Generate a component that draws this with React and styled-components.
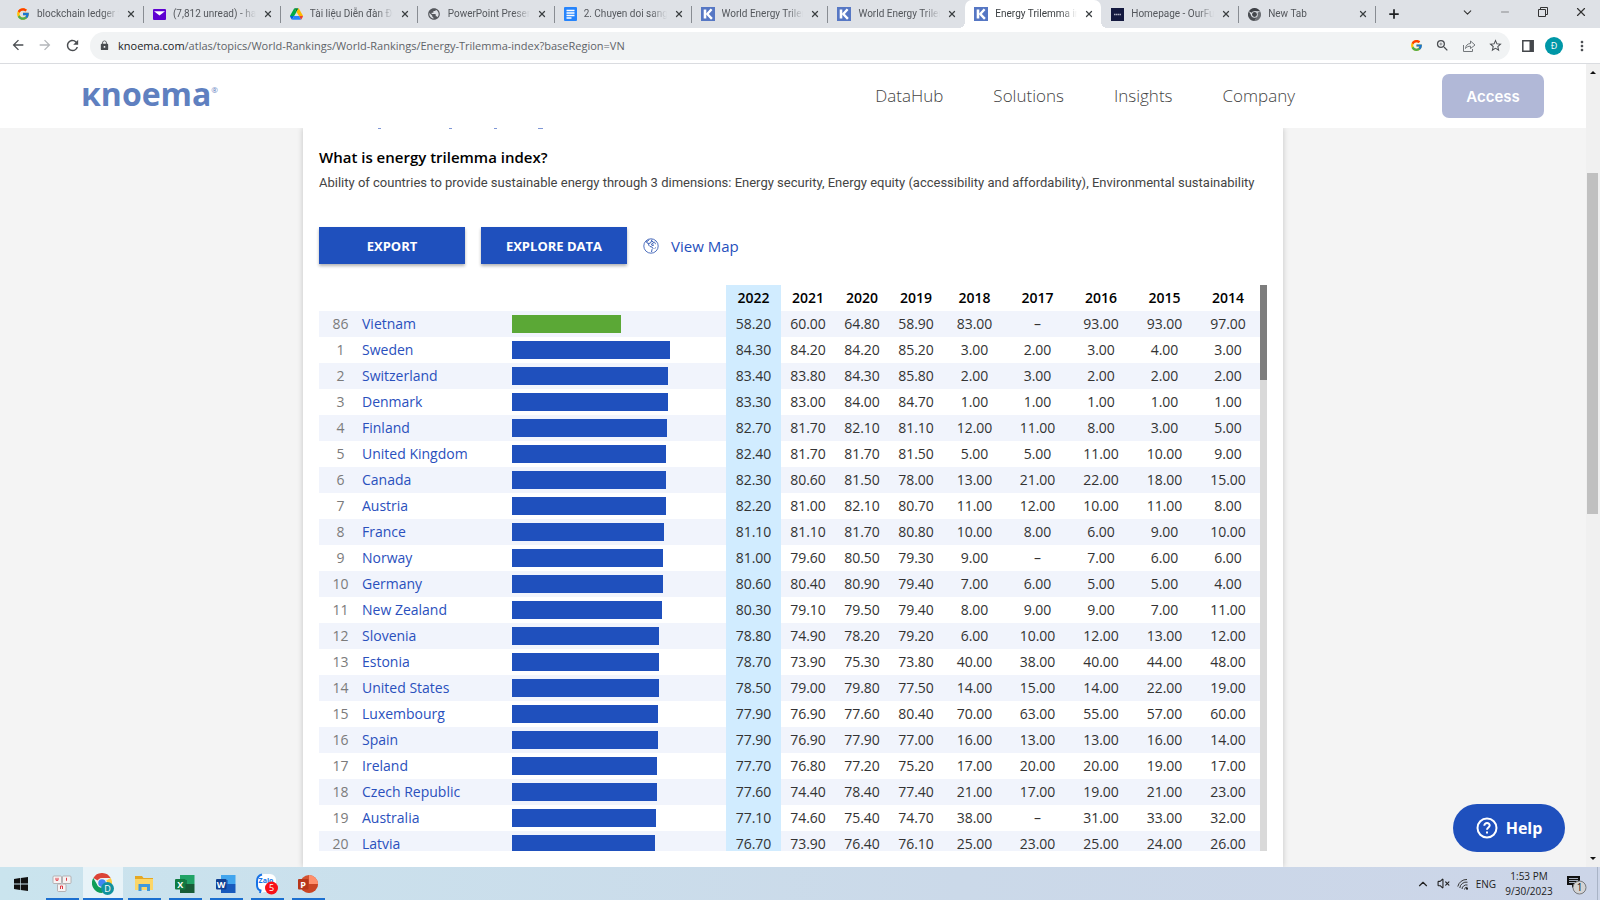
import React from "react";
import styled, { createGlobalStyle, css } from "styled-components";
import { X, Plus, ChevronDown, ChevronUp, Minus, VolumeX } from "lucide-react";
import { FcGoogle } from "react-icons/fc";
import {
  MdArrowBack,
  MdArrowForward,
  MdRefresh,
  MdLock,
  MdZoomIn,
  MdStarBorder,
  MdMoreVert,
  MdPublic,
} from "react-icons/md";

const GlobalStyle = createGlobalStyle`
  * {
    box-sizing: border-box;
  }
  body {
    margin: 0;
    font-family: "Open Sans", "Noto Sans", sans-serif;
    color: #333;
  }
  button {
    font-family: inherit;
    border: none;
    background: none;
    padding: 0;
    cursor: pointer;
  }
  a {
    text-decoration: none;
  }
  svg {
    display: block;
    flex-shrink: 0;
  }
`;

const Window = styled.div`
  display: flex;
  flex-direction: column;
  height: 100vh;
  overflow: hidden;
  background: #fff;
`;

/* ---------- browser tabs ---------- */

const TabStrip = styled.div`
  display: flex;
  height: 28px;
  padding-left: 7px;
  background: #dee1e6;
`;

const TabList = styled.div`
  display: flex;
  flex: 0 1 1369px;
  min-width: 0;
`;

const Tab = styled.div`
  position: relative;
  display: flex;
  flex: 1 1 0;
  align-items: center;
  gap: 7px;
  min-width: 0;
  padding: 0 7px 0 9px;
  ${(props) =>
    props.$active &&
    css`
      background: #fff;
      border-radius: 7px 7px 0 0;
      &::before,
      &::after {
        content: "";
        position: absolute;
        bottom: 0;
        width: 6px;
        height: 6px;
      }
      &::before {
        right: 100%;
        background: radial-gradient(circle at 0 0, #dee1e6 6px, #fff 6px);
      }
      &::after {
        left: 100%;
        background: radial-gradient(circle at 100% 0, #dee1e6 6px, #fff 6px);
      }
    `}
`;

const TabTitle = styled.span`
  flex: 1;
  overflow: hidden;
  font-family: Roboto, "Noto Sans", sans-serif;
  font-size: 10px;
  line-height: 16px;
  white-space: nowrap;
  color: ${(props) => (props.$active ? "#3c4043" : "#54575c")};
  mask-image: linear-gradient(to right, #000 80%, transparent);
`;

const TabClose = styled.button`
  display: flex;
  color: #3c4043;
`;

const TabDivider = styled.span`
  width: 1px;
  height: 17px;
  margin: 6px 0 0;
  background: ${(props) => (props.$hidden ? "transparent" : "#888c92")};
`;

const NewTab = styled.button`
  display: flex;
  align-items: center;
  padding-left: 11px;
  color: #1f2124;
`;

const WindowControls = styled.div`
  display: flex;
  align-items: center;
  gap: 24px;
  height: 24px;
  margin-left: auto;
  padding-right: 12px;
  color: #333;
`;

const ControlButton = styled.button`
  display: flex;
  align-items: center;
  justify-content: center;
  width: 14px;
  height: 14px;
  color: inherit;
`;

/* ---------- address bar ---------- */

const Toolbar = styled.div`
  display: flex;
  align-items: center;
  height: 36px;
  padding: 0 10px;
  border-bottom: 1px solid #dadce0;
  color: #4a4d51;
`;

const NavButtons = styled.div`
  display: flex;
  gap: 11px;
  width: 80px;
`;

const IconButton = styled.button`
  display: flex;
  color: ${(props) => (props.$faded ? "#b4b7ba" : "#4a4d51")};
`;

const AddressBar = styled.div`
  display: flex;
  flex: 1;
  align-items: center;
  gap: 12px;
  height: 28px;
  padding: 0 7px 0 9px;
  border-radius: 14px;
  background: #f1f3f4;
`;

const Site = styled.div`
  display: flex;
  flex: 1;
  align-items: center;
  gap: 8px;
  min-width: 0;
`;

const Url = styled.div`
  overflow: hidden;
  font-size: 11px;
  white-space: nowrap;
  color: #5f6368;
  span {
    color: #202124;
  }
`;

const ToolbarEnd = styled.div`
  display: flex;
  align-items: center;
  gap: 11px;
  padding-left: 12px;
`;

const Avatar = styled.span`
  width: 18px;
  height: 18px;
  border-radius: 50%;
  background: #0097a7;
  color: #fff;
  font-size: 9px;
  line-height: 18px;
  text-align: center;
`;

/* ---------- page ---------- */

const Viewport = styled.div`
  display: flex;
  flex: 1;
  min-height: 0;
  background: #f4f4f4;
`;

const Page = styled.div`
  position: relative;
  display: flex;
  flex: 1;
  flex-direction: column;
  min-width: 0;
`;

const SiteHeader = styled.header`
  display: flex;
  align-items: center;
  height: 64px;
  padding: 0 42px 0 81px;
  background: #fff;
`;

const Logo = styled.a`
  display: flex;
  align-items: flex-start;
  margin-right: auto;
  padding-bottom: 4px;
  font-size: 32px;
  font-weight: 700;
  line-height: 40px;
  color: #5f80c0;
  sup {
    font-size: 8px;
    font-weight: 400;
    line-height: 32px;
  }
`;

const SiteNav = styled.nav`
  display: flex;
  gap: 50px;
  margin-right: 147px;
`;

const NavLink = styled.a`
  font-size: 17px;
  font-weight: 300;
  line-height: 24px;
  color: #444;
`;

const AccessButton = styled.button`
  width: 102px;
  height: 44px;
  border-radius: 7px;
  background: #b1b8d7;
  color: #fff;
  font-family: Inter, sans-serif;
  font-size: 15px;
  font-weight: 600;
`;

const Card = styled.main`
  display: flex;
  flex: 1;
  flex-direction: column;
  width: 100%;
  max-width: 980px;
  min-height: 0;
  margin: 0 auto;
  padding: 0 16px 16px;
  background: #fff;
  box-shadow: 0 0 6px rgba(0, 0, 0, 0.2);
`;

const CardClip = styled.div`
  display: flex;
  flex: 1;
  min-height: 0;
  overflow: hidden;
`;

const Question = styled.h1`
  margin: 16px 0 0;
  font-size: 15px;
  font-weight: 600;
  line-height: 22px;
  color: #000;
`;

const Description = styled.p`
  margin: 5px 0 0;
  font-family: Roboto, "Noto Sans", sans-serif;
  font-size: 13px;
  line-height: 20px;
  color: #444;
`;

const Actions = styled.div`
  display: flex;
  align-items: center;
  gap: 16px;
  margin: 34px 0 21px;
`;

const ActionButton = styled.button`
  width: 146px;
  height: 37px;
  background: #1f50bd;
  box-shadow: 0 2px 3px rgba(0, 0, 0, 0.3);
  color: #fff;
  font-size: 13px;
  font-weight: 700;
`;

const MapLink = styled.a`
  display: flex;
  align-items: center;
  gap: 12px;
  font-size: 15px;
  line-height: 20px;
  color: #1f50bd;
`;

const TableArea = styled.div`
  display: flex;
  flex: 1;
  min-height: 0;
`;

const TableClip = styled.div`
  flex: 1;
  overflow: hidden;
`;

const RankTable = styled.table`
  width: 100%;
  table-layout: fixed;
  border-collapse: collapse;
  font-size: 14px;
`;

const Row = styled.tr`
  height: 26px;
  background: ${(props) => (props.$striped ? "#f1f4fc" : "#fff")};
`;

const Cell = styled.td`
  padding: 0;
  line-height: 20px;
  text-align: center;
  background: ${(props) => (props.$current ? "#d1ecff" : "transparent")};
`;

const YearHead = styled.th`
  padding: 0;
  font-weight: 600;
  line-height: 20px;
  color: #000;
  background: ${(props) => (props.$current ? "#d1ecff" : "transparent")};
`;

const RankCell = styled(Cell)`
  color: #7b7b7b;
`;

const NameCell = styled(Cell)`
  text-align: left;
  a {
    color: #2a50bd;
  }
`;

const Bar = styled.div`
  height: 18px;
  background: ${(props) => (props.$selected ? "#5ba836" : "#1f50bd")};
`;

const TableScroll = styled.div`
  width: 7px;
  background: #d9d9d9;
`;

const TableThumb = styled.div`
  height: 95px;
  background: #7d7d7d;
`;

const HelpButton = styled.button`
  position: absolute;
  right: 21px;
  bottom: 15px;
  display: flex;
  align-items: center;
  justify-content: center;
  gap: 8px;
  width: 112px;
  height: 48px;
  border-radius: 24px;
  background: #1f50bd;
  color: #fff;
  font-size: 16px;
  font-weight: 700;
`;

const PageScroll = styled.div`
  display: flex;
  flex-direction: column;
  width: 14px;
  background: #f0f0f0;
`;

const ScrollArrow = styled.button`
  display: flex;
  align-items: center;
  justify-content: center;
  height: 17px;
`;

const ScrollSpace = styled.div`
  flex: ${(props) => props.$grow};
`;

const ScrollThumb = styled.div`
  flex: 341;
  margin: 0 2px 0 1px;
  background: #c0c0c0;
`;

/* ---------- taskbar ---------- */

const Taskbar = styled.footer`
  display: flex;
  height: 33px;
  padding-left: 1px;
  background: linear-gradient(to right, #cae4ee, #cbd9e9 60%, #ccd5e8);
`;

const TaskList = styled.div`
  display: flex;
  gap: 1px;
`;

const TaskButton = styled.button`
  display: flex;
  align-items: center;
  justify-content: center;
  width: 40px;
  background: ${(props) => (props.$active ? "#e8f3f8" : "transparent")};
  background-image: ${(props) =>
    props.$running ? "linear-gradient(#1b6fd0, #1b6fd0)" : "none"};
  background-repeat: no-repeat;
  background-position: center bottom;
  background-size: ${(props) => (props.$active ? "40px" : "33px")} 2px;
`;

const Tray = styled.div`
  display: flex;
  align-items: center;
  gap: 7px;
  margin-left: auto;
  padding-right: 2px;
  font-size: 10px;
  color: #222;
`;

const Clock = styled.div`
  width: 56px;
  padding-right: 4px;
  line-height: 15px;
  text-align: center;
`;

const DesktopEdge = styled.span`
  align-self: stretch;
  width: 1px;
  margin-left: 3px;
  background: #a9b4c6;
`;

/* ---------- icons ---------- */

const MailIcon = () => (
  <svg width="13" height="11" viewBox="0 0 13 11">
    <rect width="13" height="11" rx="1" fill="#5f01d1" />
    <path d="M1 2.2h11L6.5 6.6z" fill="#fff" />
  </svg>
);

const DriveIcon = () => (
  <svg width="13" height="12" viewBox="0 0 87 78">
    <path d="M6.6 66.9l3.9 6.6c.8 1.4 2 2.5 3.3 3.3L27.5 53H0c0 1.5.4 3.1 1.2 4.5z" fill="#0066da" />
    <path d="M43.7 25L29.9 1.2c-1.3.8-2.5 1.9-3.3 3.3L1.2 48.5A9 9 0 000 53h27.5z" fill="#00ac47" />
    <path d="M73.6 76.8c1.3-.8 2.5-1.9 3.3-3.3l8.3-14.5c.8-1.4 1.2-3 1.2-4.5V53H59.8l5.9 11.5z" fill="#ea4335" />
    <path d="M43.7 25L57.4 1.2A9 9 0 0053 0H34.4c-1.6 0-3.2.4-4.5 1.2z" fill="#00832d" />
    <path d="M59.8 53H27.5L13.8 76.8c1.3.8 2.9 1.2 4.5 1.2h50.8c1.6 0 3.2-.4 4.5-1.2z" fill="#2684fc" />
    <path d="M73.4 26.5l-12.7-22c-.8-1.4-2-2.5-3.3-3.3L43.7 25l16.1 28h27.5c0-1.5-.4-3.1-1.2-4.5z" fill="#ffba00" />
  </svg>
);

const DocsIcon = () => (
  <svg width="13" height="14" viewBox="0 0 13 14">
    <rect width="13" height="14" rx="1" fill="#2684fc" />
    <path d="M2.5 3.5h8M2.5 6h8M2.5 8.5h8M2.5 11h5" stroke="#fff" strokeWidth="1.3" />
  </svg>
);

const KnoemaIcon = () => (
  <svg width="14" height="14" viewBox="0 0 14 14">
    <rect width="14" height="14" fill="#5677c4" />
    <path d="M4 2.5v9" stroke="#fff" strokeWidth="2.6" />
    <path d="M10.6 2.2L6.3 7l4.6 4.8" fill="none" stroke="#fff" strokeWidth="2.4" />
  </svg>
);

const HomepageIcon = () => (
  <svg width="13" height="13" viewBox="0 0 13 13">
    <rect width="13" height="13" fill="#14193f" />
    <path d="M3 6.5h7" stroke="#a9acc0" strokeWidth="1.5" strokeDasharray="1.5 .4" />
  </svg>
);

const ChromeIcon = ({ size = 13, gray = false }) => (
  <svg width={size} height={size} viewBox="0 0 24 24">
    <path d="M12 12L1.6 6A12 12 0 0122.4 6H12z" fill={gray ? "#3f4247" : "#db4437"} />
    <path d="M12 12L22.4 6A12 12 0 0112 24l5.2-9z" fill={gray ? "#6b6e73" : "#ffcd40"} />
    <path d="M12 12l5.2 3L12 24A12 12 0 011.6 6l5.2 9z" fill={gray ? "#4b4e53" : "#0f9d58"} />
    <circle cx="12" cy="12" r="6" fill={gray ? "#dee1e6" : "#f1f1f1"} />
    <circle cx="12" cy="12" r="4.5" fill={gray ? "#44474c" : "#4285f4"} />
  </svg>
);

const RestoreIcon = () => (
  <svg width="10" height="10" viewBox="0 0 10 10" fill="none" stroke="#333">
    <path d="M.5 2.5h7v7h-7zM2.5 2.5v-2h7v7h-2" />
  </svg>
);

const ShareIcon = () => (
  <svg width="14" height="14" viewBox="0 0 14 14" fill="none" stroke="#73777b" strokeLinejoin="round">
    <path d="M1.5 6v6.5h9V10" />
    <path d="M3.5 9.5c.3-3 2-4.8 5-5V2L13 6 8.5 9.5V7.2c-2.2 0-3.7.6-5 2.3z" />
  </svg>
);

const SidePanelIcon = () => (
  <svg width="12" height="12" viewBox="0 0 12 12">
    <path d="M.8.8h10.4v10.4H.8z" fill="none" stroke="#44474b" strokeWidth="1.5" />
    <path d="M7.5 1H11v10H7.5z" fill="#44474b" />
  </svg>
);

const GlobeIcon = () => (
  <svg width="16" height="16" viewBox="0 0 16 16" fill="none" stroke="#3f63b8" strokeLinejoin="round">
    <circle cx="8" cy="8" r="7.2" strokeWidth=".9" />
    <path
      d="M6 1.5L5 3l-1.5.5.5 1.5 2 .5-.5 1.5L7 8.5l2 .5 1 1.5-1 1-.5 2.5M6 5.5l2-1 .5-2M9 1.5L8.5 3l2 1-.5 1.5-1.5.5L9 7.5l2-.5"
      strokeWidth="1"
    />
    <path d="M12 3.5L11.500 5l1.500 1M11.500 10.500l1.500-1" strokeWidth=".8" />
  </svg>
);

const HelpIcon = () => (
  <svg width="22" height="22" viewBox="0 0 22 22" fill="none" stroke="#fff" strokeWidth="2">
    <circle cx="11" cy="11" r="9.5" />
    <path d="M8.3 8.7c0-3.7 5.6-3.4 5.4-.2-.1 2-2.7 2-2.7 4.3" />
    <path d="M11 14.5v2" />
  </svg>
);

// Tails of the source link that has scrolled under the site header
const ScrolledLine = () => (
  <svg width="240" height="2" viewBox="0 0 240 2">
    <path d="M59 .5h3M130 .5h3M175 .5h3M219 .5h5" stroke="#7f97d6" />
  </svg>
);

const WindowsIcon = () => (
  <svg width="14" height="14" viewBox="0 0 14 14" fill="#111">
    <path d="M0 2l6-.9v5.5H0zM6.7 1L14 0v6.6H6.7zM0 7.4h6v5.5L0 12zM6.7 7.4H14V14l-7.3-1z" />
  </svg>
);

const KeysIcon = () => (
  <svg width="20" height="18" viewBox="0 0 20 18">
    <g fill="#f6f3f3" stroke="#a9a3a5" strokeWidth=".8">
      <rect x="1" y="1" width="8.5" height="7.5" rx="1" />
      <rect x="10.5" y="1" width="8.5" height="7.5" rx="1" />
      <rect x="5.5" y="9" width="8.5" height="7.5" rx="1" />
    </g>
    <path d="M4 2.8v2.5h2V2.8M14.5 2.8v3M8.500 14v-3h2v3" stroke="#e03a44" fill="none" />
  </svg>
);

const TaskChromeIcon = () => (
  <svg width="24" height="24" viewBox="0 0 24 24">
    <svg x="1" y="1" width="20" height="20" viewBox="0 0 24 24">
      <ChromeIcon size={24} />
    </svg>
    <circle cx="16.5" cy="16.5" r="6.5" fill="#11929e" />
    <text x="16.5" y="20" fontSize="9" textAnchor="middle" fill="#fff">
      D
    </text>
  </svg>
);

const FolderIcon = () => (
  <svg width="19" height="17" viewBox="0 0 19 17">
    <path d="M0 1h7l1.5 2H18v12H0z" fill="#e5a823" />
    <path d="M0 4h18v11H0z" fill="#fcd667" />
    <path d="M3.5 9H15v7h-3v-4H6.5v4h-3z" fill="#3f98dc" />
  </svg>
);

const OfficeIcon = ({ letter, colors }) => (
  <svg width="20" height="18" viewBox="0 0 20 18">
    <path d="M5 0h14.5v9H5z" fill={colors[0]} />
    <path d="M5 9h14.5v9H5z" fill={colors[1]} />
    <path d="M5 5h7v9H5z" fill={colors[1]} opacity=".6" />
    <rect x="0" y="4" width="10.5" height="10.5" rx="1" fill={colors[2]} />
    <text x="5.2" y="12.5" fontSize="9" fontWeight="700" textAnchor="middle" fill="#fff">
      {letter}
    </text>
  </svg>
);

const PowerPointIcon = () => (
  <svg width="20" height="18" viewBox="0 0 20 18">
    <circle cx="11" cy="9" r="9" fill="#d35230" />
    <path d="M11 0a9 9 0 019 9h-9z" fill="#ff8f6b" />
    <path d="M2 9h18a9 9 0 01-18 0z" fill="#c43e1c" opacity=".6" />
    <rect x="0" y="4" width="10.5" height="10.5" rx="1" fill="#b7371a" />
    <text x="5.2" y="12.5" fontSize="9" fontWeight="700" textAnchor="middle" fill="#fff">
      P
    </text>
  </svg>
);

const ZaloIcon = () => (
  <svg width="22" height="22" viewBox="0 0 22 22">
    <path
      d="M8 1h6a6 6 0 016 6v5a7 7 0 01-7 7H8l-4 1.5.5-3A7 7 0 011 12V8a7 7 0 017-7z"
      fill="#fff"
    />
    <path d="M6 1.5C2.5 2.5 1 5 1 8v4c0 3 2 5 3.5 5.5L4 20" fill="none" stroke="#1673e6" strokeWidth="2" />
    <text x="10" y="10" fontSize="7" fontWeight="700" textAnchor="middle" fill="#1673e6">
      Zalo
    </text>
    <circle cx="15.5" cy="15" r="6.5" fill="#f80f18" />
    <text x="15.5" y="18" fontSize="9" textAnchor="middle" fill="#fff">
      5
    </text>
  </svg>
);

const WifiIcon = () => (
  <svg width="12" height="12" viewBox="0 0 12 12" fill="none" stroke="#333">
    <path d="M.8 8.5A9 9 0 0110 1.5M2.8 10A6.5 6.5 0 0110.5 4.2M5 11a4.5 4.5 0 015.5-4M7.5 11.5a2.5 2.5 0 013-2.2" />
    <circle cx="10" cy="10.8" r="1" fill="#111" stroke="none" />
  </svg>
);

const NoticeIcon = () => (
  <svg width="21" height="22" viewBox="0 0 21 22">
    <path d="M1 3h13v9H9l-3 3v-3H1z" fill="#111" />
    <path d="M3 5.5h9M3 7.5h9M3 9.5h6" stroke="#ccd5e8" strokeWidth=".8" />
    <circle cx="13.5" cy="14.5" r="6.5" fill="#d3d3d3" stroke="#77797c" />
    <text x="13.5" y="18" fontSize="10" textAnchor="middle" fill="#111">
      1
    </text>
  </svg>
);

/* ---------- data ---------- */

const tabs = [
  { title: "blockchain ledger te", icon: <FcGoogle size={14} /> },
  { title: "(7,812 unread) - han", icon: <MailIcon /> },
  { title: "Tài liệu Diễn đàn Đổi", icon: <DriveIcon /> },
  { title: "PowerPoint Presenta", icon: <MdPublic size={14} color="#55585d" /> },
  { title: "2. Chuyen doi sang s", icon: <DocsIcon /> },
  { title: "World Energy Trilem", icon: <KnoemaIcon /> },
  { title: "World Energy Trilem", icon: <KnoemaIcon /> },
  { title: "Energy Trilemma ind", icon: <KnoemaIcon />, active: true },
  { title: "Homepage - OurFut", icon: <HomepageIcon /> },
  { title: "New Tab", icon: <ChromeIcon gray /> },
];

const years = [2022, 2021, 2020, 2019, 2018, 2017, 2016, 2015, 2014];
const yearWidths = [55, 54, 54, 54, 63, 63, 64, 63, 64];

const countries = [
  [86, "Vietnam", 58.2, 60, 64.8, 58.9, 83, null, 93, 93, 97],
  [1, "Sweden", 84.3, 84.2, 84.2, 85.2, 3, 2, 3, 4, 3],
  [2, "Switzerland", 83.4, 83.8, 84.3, 85.8, 2, 3, 2, 2, 2],
  [3, "Denmark", 83.3, 83, 84, 84.7, 1, 1, 1, 1, 1],
  [4, "Finland", 82.7, 81.7, 82.1, 81.1, 12, 11, 8, 3, 5],
  [5, "United Kingdom", 82.4, 81.7, 81.7, 81.5, 5, 5, 11, 10, 9],
  [6, "Canada", 82.3, 80.6, 81.5, 78, 13, 21, 22, 18, 15],
  [7, "Austria", 82.2, 81, 82.1, 80.7, 11, 12, 10, 11, 8],
  [8, "France", 81.1, 81.1, 81.7, 80.8, 10, 8, 6, 9, 10],
  [9, "Norway", 81, 79.6, 80.5, 79.3, 9, null, 7, 6, 6],
  [10, "Germany", 80.6, 80.4, 80.9, 79.4, 7, 6, 5, 5, 4],
  [11, "New Zealand", 80.3, 79.1, 79.5, 79.4, 8, 9, 9, 7, 11],
  [12, "Slovenia", 78.8, 74.9, 78.2, 79.2, 6, 10, 12, 13, 12],
  [13, "Estonia", 78.7, 73.9, 75.3, 73.8, 40, 38, 40, 44, 48],
  [14, "United States", 78.5, 79, 79.8, 77.5, 14, 15, 14, 22, 19],
  [15, "Luxembourg", 77.9, 76.9, 77.6, 80.4, 70, 63, 55, 57, 60],
  [16, "Spain", 77.9, 76.9, 77.9, 77, 16, 13, 13, 16, 14],
  [17, "Ireland", 77.7, 76.8, 77.2, 75.2, 17, 20, 20, 19, 17],
  [18, "Czech Republic", 77.6, 74.4, 78.4, 77.4, 21, 17, 19, 21, 23],
  [19, "Australia", 77.1, 74.6, 75.4, 74.7, 38, null, 31, 33, 32],
  [20, "Latvia", 76.7, 73.9, 76.4, 76.1, 25, 23, 25, 24, 26],
];

const formatValue = (value) => (value === null ? "–" : value.toFixed(2));

/* ---------- sections ---------- */

const BrowserTabs = () => (
  <TabStrip>
    <TabList>
      {tabs.map((tab, i) => (
        <React.Fragment key={i}>
          <Tab $active={tab.active}>
            {tab.icon}
            <TabTitle $active={tab.active}>{tab.title}</TabTitle>
            <TabClose aria-label="Close tab">
              <X size={10} strokeWidth={3} />
            </TabClose>
          </Tab>
          <TabDivider $hidden={tab.active || (tabs[i + 1] && tabs[i + 1].active)} />
        </React.Fragment>
      ))}
    </TabList>
    <NewTab aria-label="New tab">
      <Plus size={14} strokeWidth={3} />
    </NewTab>
    <WindowControls>
      <ControlButton aria-label="Search tabs">
        <ChevronDown size={13} />
      </ControlButton>
      <ControlButton aria-label="Minimize">
        <Minus size={12} strokeWidth={1} />
      </ControlButton>
      <ControlButton aria-label="Restore">
        <RestoreIcon />
      </ControlButton>
      <ControlButton aria-label="Close">
        <X size={14} strokeWidth={2} />
      </ControlButton>
    </WindowControls>
  </TabStrip>
);

const BrowserToolbar = () => (
  <Toolbar>
    <NavButtons>
      <IconButton aria-label="Back">
        <MdArrowBack size={16} />
      </IconButton>
      <IconButton aria-label="Forward" $faded>
        <MdArrowForward size={16} />
      </IconButton>
      <IconButton aria-label="Reload">
        <MdRefresh size={17} />
      </IconButton>
    </NavButtons>
    <AddressBar>
      <Site>
        <MdLock size={11} />
        <Url>
          <span>knoema.com</span>
          /atlas/topics/World-Rankings/World-Rankings/Energy-Trilemma-index?baseRegion=VN
        </Url>
      </Site>
      <IconButton aria-label="Search with Google">
        <FcGoogle size={13} />
      </IconButton>
      <IconButton aria-label="Zoom">
        <MdZoomIn size={15} />
      </IconButton>
      <IconButton aria-label="Share">
        <ShareIcon />
      </IconButton>
      <IconButton aria-label="Bookmark">
        <MdStarBorder size={15} />
      </IconButton>
    </AddressBar>
    <ToolbarEnd>
      <IconButton aria-label="Side panel">
        <SidePanelIcon />
      </IconButton>
      <Avatar>Đ</Avatar>
      <IconButton aria-label="Menu">
        <MdMoreVert size={16} />
      </IconButton>
    </ToolbarEnd>
  </Toolbar>
);

const Rankings = () => (
  <TableArea>
    <TableClip>
      <RankTable>
        <colgroup>
          <col width="43" />
          <col width="150" />
          <col width="214" />
          {yearWidths.map((width, i) => (
            <col key={i} width={width} />
          ))}
        </colgroup>
        <thead>
          <Row>
            <Cell />
            <Cell />
            <Cell />
            {years.map((year) => (
              <YearHead key={year} $current={year === 2022}>
                {year}
              </YearHead>
            ))}
          </Row>
        </thead>
        <tbody>
          {countries.map(([rank, name, ...values], i) => (
            <Row key={name} $striped={i % 2 === 0}>
              <RankCell>{rank}</RankCell>
              <NameCell>
                <a href="#country">{name}</a>
              </NameCell>
              <Cell>
                <Bar
                  $selected={name === "Vietnam"}
                  style={{ width: Math.round(values[0] * 1.87) }}
                />
              </Cell>
              {values.map((value, j) => (
                <Cell key={years[j]} $current={j === 0}>
                  {formatValue(value)}
                </Cell>
              ))}
            </Row>
          ))}
        </tbody>
      </RankTable>
    </TableClip>
    <TableScroll>
      <TableThumb />
    </TableScroll>
  </TableArea>
);

const App = () => {
  return (
    <>
      <GlobalStyle />
      <Window>
        <BrowserTabs />
        <BrowserToolbar />
        <Viewport>
          <Page>
            <SiteHeader>
              <Logo href="#home">
                ĸnoema<sup>®</sup>
              </Logo>
              <SiteNav>
                <NavLink href="#datahub">DataHub</NavLink>
                <NavLink href="#solutions">Solutions</NavLink>
                <NavLink href="#insights">Insights</NavLink>
                <NavLink href="#company">Company</NavLink>
              </SiteNav>
              <AccessButton>Access</AccessButton>
            </SiteHeader>
            <CardClip>
              <Card>
                <ScrolledLine />
                <Question>What is energy trilemma index?</Question>
                <Description>
                  Ability of countries to provide sustainable energy through 3 dimensions: Energy
                  security, Energy equity (accessibility and affordability), Environmental
                  sustainability
                </Description>
                <Actions>
                  <ActionButton>EXPORT</ActionButton>
                  <ActionButton>EXPLORE DATA</ActionButton>
                  <MapLink href="#map">
                    <GlobeIcon />
                    View Map
                  </MapLink>
                </Actions>
                <Rankings />
              </Card>
            </CardClip>
            <HelpButton>
              <HelpIcon />
              Help
            </HelpButton>
          </Page>
          <PageScroll>
            <ScrollArrow aria-label="Scroll up">
              <svg width="6" height="3" viewBox="0 0 6 3">
                <path d="M0 3l3-3 3 3z" fill="#111" />
              </svg>
            </ScrollArrow>
            <ScrollSpace $grow={92} />
            <ScrollThumb />
            <ScrollSpace $grow={336} />
            <ScrollArrow aria-label="Scroll down">
              <svg width="6" height="3" viewBox="0 0 6 3">
                <path d="M0 0l3 3 3-3z" fill="#111" />
              </svg>
            </ScrollArrow>
          </PageScroll>
        </Viewport>
        <Taskbar>
          <TaskList>
            <TaskButton aria-label="Start">
              <WindowsIcon />
            </TaskButton>
            <TaskButton aria-label="UniKey" $running>
              <KeysIcon />
            </TaskButton>
            <TaskButton aria-label="Chrome" $running $active>
              <TaskChromeIcon />
            </TaskButton>
            <TaskButton aria-label="File Explorer" $running>
              <FolderIcon />
            </TaskButton>
            <TaskButton aria-label="Excel" $running>
              <OfficeIcon letter="X" colors={["#21a366", "#185c37", "#107c41"]} />
            </TaskButton>
            <TaskButton aria-label="Word" $running>
              <OfficeIcon letter="W" colors={["#41a5ee", "#185abd", "#103f91"]} />
            </TaskButton>
            <TaskButton aria-label="Zalo" $running>
              <ZaloIcon />
            </TaskButton>
            <TaskButton aria-label="PowerPoint" $running>
              <PowerPointIcon />
            </TaskButton>
          </TaskList>
          <Tray>
            <ChevronUp size={14} strokeWidth={2} />
            <VolumeX size={13} strokeWidth={2} />
            <WifiIcon />
            <span>ENG</span>
            <Clock>
              1:53 PM
              <br />
              9/30/2023
            </Clock>
            <NoticeIcon />
            <DesktopEdge />
          </Tray>
        </Taskbar>
      </Window>
    </>
  );
};

export default App;
